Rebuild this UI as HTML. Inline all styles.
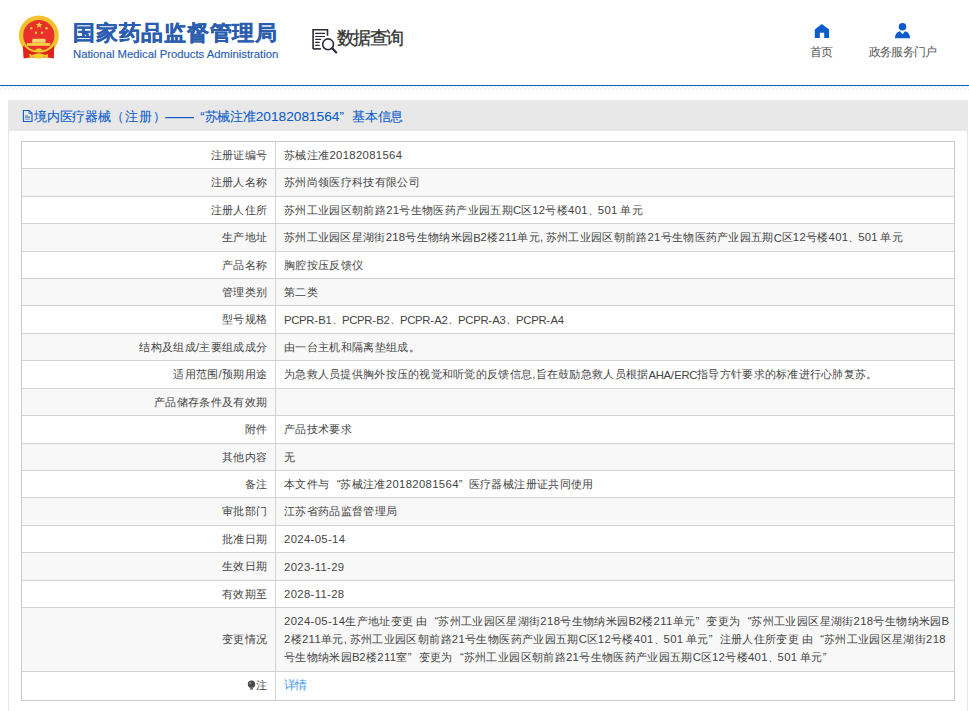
<!DOCTYPE html>
<html><head><meta charset="utf-8">
<style>
*{box-sizing:border-box;margin:0;padding:0}
html,body{width:969px;height:711px;overflow:hidden;background:#fff;font-family:"Liberation Sans",sans-serif;color:#333}
q{quotes:none}
u{text-decoration:none;letter-spacing:-0.3px}
b.dn{font-weight:normal;letter-spacing:-1.2px}
.hdr{position:absolute;left:0;top:0;width:969px;height:91px}
.emb,.sq,.navi{position:absolute;left:0;top:0}
.doc{position:absolute;left:0;top:0}
.t1{position:absolute;left:73px;top:19px;font-size:22px;font-weight:bold;color:#2a5db0;white-space:nowrap;letter-spacing:0.75px;-webkit-text-stroke:0.35px #2a5db0;transform:scaleY(0.96);transform-origin:0 0}
.t2{position:absolute;left:73px;top:48px;font-size:11.3px;color:#2a5db0;white-space:nowrap;-webkit-text-stroke:0.15px #2a5db0}
.sqt{position:absolute;left:337px;top:26px;font-size:18px;color:#333;-webkit-text-stroke:0.3px #333;white-space:nowrap;letter-spacing:-1.6px}
.nav1{position:absolute;left:810px;top:44px;font-size:12px;color:#555;white-space:nowrap;letter-spacing:-0.8px}
.nav2{position:absolute;left:869px;top:44px;font-size:12px;color:#555;white-space:nowrap;letter-spacing:-0.8px}
.line{position:absolute;left:0;top:85px;width:969px;height:1px;background:#0b5ec5}
.stripe{position:absolute;left:0;top:86px;width:969px;height:4px}
.panel{position:absolute;left:8px;top:100px;width:960px;height:640px;border-left:1px solid #e6e6e6;border-right:1px solid #e6e6e6;background:#fff}
.ph{position:absolute;left:-1px;top:0;width:960px;height:31px;background:#e8e8e8}
.h1,.h2,.h3{position:absolute;top:108px;font-size:13px;color:#0d5dcc;-webkit-text-stroke:0.1px #0d5dcc;white-space:nowrap;letter-spacing:-0.2px;line-height:17px}
.h1{left:34px}.h2{left:196px}.h3{left:352px}
.hn{font-size:13.7px;letter-spacing:0}
.hp{letter-spacing:0.9px}
.tb{position:absolute;left:21px;top:141px;width:934px;height:560px;border:1px solid #cdcacd;border-top:0;font-size:11.3px;color:#444;letter-spacing:0.35px;word-spacing:-1px}
.r{position:absolute;left:0;width:932px;border-top:1px solid #d3d1d3;background:#fff}
.r:first-child{border-top-color:#cdcacd}
.r.g{background:#f8f8f8}
.l{position:absolute;left:0;top:0;bottom:0;width:253px;padding-right:7.5px;display:flex;align-items:center;justify-content:flex-end;white-space:nowrap}
.v{position:absolute;left:253px;top:0;bottom:0;right:0;border-left:1px solid #d3d1d3;padding-left:8px;display:flex;align-items:center;white-space:nowrap}
.v.m{line-height:18px;display:block;padding-top:4px}
q.o{display:inline-block;width:8.5px;text-align:right;letter-spacing:0}
q.c{display:inline-block;width:8.5px;text-align:left;letter-spacing:0}
.pin{width:9px;height:11px;margin-right:0.5px;vertical-align:middle}
.lst .l,.lst .v{padding-bottom:2px}
.lst a{font-size:12.4px;letter-spacing:-1.2px;color:#3b93ee}
a{color:#2a8ae8;text-decoration:none}

</style></head><body>
<div class="hdr">
  <svg class="emb" width="969" height="91" viewBox="0 0 969 91">
    <circle cx="38.8" cy="35.6" r="20" fill="#f2c12c"/>
    <circle cx="38.8" cy="35.6" r="15.6" fill="#e9302a"/>
    <path d="M22.8 46.5 L24.8 45.6 C28.3 49.6 33.2 51.6 38.9 51.6 C44.6 51.6 49.5 49.6 53 45.6 L54.2 46.5 L53.8 58.4 L47.5 57.6 L30.5 57.6 L23.6 58.4Z" fill="#e3211b"/>
    <path d="M24.8 45.6 C28.3 49.6 33.2 51.6 38.9 51.6 C44.6 51.6 49.5 49.6 53 45.6" fill="none" stroke="#f4cc2a" stroke-width="1.6"/>
    <path d="M35 50.5 C36 48.6 37.5 48.4 38.9 48.4 C40.3 48.4 41.8 48.6 42.8 50.5 L42 52 L35.8 52Z" fill="#f4cc2a"/>
    <path d="M39.1 21.8l0.95 2.2 2.4 0.1-1.85 1.5 0.65 2.3-2.15-1.35-2.15 1.35 0.65-2.3-1.85-1.5 2.4-0.1z" fill="#f6cf3a"/>
    <circle cx="31.3" cy="28.2" r="1.2" fill="#f6cf3a"/><circle cx="46.6" cy="28.2" r="1.2" fill="#f6cf3a"/>
    <circle cx="36" cy="32.7" r="1.2" fill="#f6cf3a"/><circle cx="42" cy="32.7" r="1.2" fill="#f6cf3a"/>
    <path d="M32.8 38.7h12.2l0.6 1.2v2.8h-13.4v-2.8z" fill="#f5d66e"/>
    <path d="M26.9 43h23.4v2.8h-23.4z" fill="#f6d040"/>
    <path d="M29 53.8 L32.5 55 L36 53.8 L38.9 53.3 L41.8 53.8 L45.2 55 L48.2 53.8 L47.4 58.4 L44.5 56.5 L41.5 58.4 L36.3 58.4 L33.3 56.5 L30.4 58.4Z" fill="#f4cc2a"/>
  </svg>
  <div class="t1">国家药品监督管理局</div>
  <div class="t2">National Medical Products Administration</div>
  <svg class="sq" width="969" height="91" viewBox="0 0 969 91">
    <path d="M313.1 48.9V29.8H327.5V35.7" fill="none" stroke="#2b2b3b" stroke-width="1.6"/>
    <path d="M313.1 48.9H320.9" fill="none" stroke="#2b2b3b" stroke-width="1.6"/>
    <path d="M315.2 33.4H325M315.2 36.5H325M315.2 39.4H321.2M315.2 42.4H319.7M315.2 45.4H319.7" fill="none" stroke="#2b2b3b" stroke-width="1.1"/>
    <circle cx="328.1" cy="44.3" r="5.4" fill="none" stroke="#2b2b3b" stroke-width="1.6"/>
    <path d="M332.2 48.2L336.2 52.4" fill="none" stroke="#2b2b3b" stroke-width="2.2" stroke-linecap="round"/>
  </svg>
  <div class="sqt">数据查询</div>
  <svg class="navi" width="969" height="91" viewBox="0 0 969 91">
    <path d="M821.8 23.9L829.1 29.6V37.9H824.2V32.8H819.8V37.9H814.8V29.6Z" fill="#0b5cc9"/>
    <circle cx="902.5" cy="26.8" r="3.8" fill="#0b5cc9"/>
    <path d="M895 38.2C895 34 897.5 31.6 900 31.2L902.5 34.2L905 31.2C907.5 31.6 910.1 34 910.1 38.2Z" fill="#0b5cc9"/>
  </svg>
  <div class="nav1">首页</div>
  <div class="nav2">政务服务门户</div>
</div>
<div class="line"></div><svg class="stripe" width="969" height="4"><defs><pattern id="sp" width="4" height="4" patternUnits="userSpaceOnUse" x="0"><path d="M-1 5L5 -1" stroke="#e2e2e2" stroke-width="0.9"/></pattern></defs><rect width="969" height="4" fill="url(#sp)"/></svg>
<div class="panel">
  <div class="ph"></div>
</div>
<svg class="doc" width="969" height="140" viewBox="0 0 969 140"><path d="M23.4 110.5H29.2L32 113.3V121.5H23.4Z" fill="none" stroke="#0d5dcc" stroke-width="1.1"/><path d="M29 110.8V113.6H31.8" fill="none" stroke="#0d5dcc" stroke-width="0.8"/><rect x="25" y="115" width="3" height="1" fill="#9ab"/><rect x="25" y="116.6" width="5" height="1" fill="#0d5dcc"/><rect x="25" y="118.4" width="5" height="1.6" fill="#9fb3d8"/><rect x="165.2" y="117" width="28.8" height="1.2" fill="#0d5dcc"/></svg>
<div class="h1">境内医疗器械<span class="hp">（注册）</span></div>
<div class="h2"><q class="o">“</q>苏械注准<span class="hn">20182081564</span><q class="c">”</q></div>
<div class="h3">基本信息</div>

<div class="tb">
<div class="r" style="top:0px;height:27px"><div class="l">注册证编号</div><div class="v">苏械注准20182081564</div></div>
<div class="r g" style="top:27px;height:28px"><div class="l">注册人名称</div><div class="v">苏州尚领医疗科技有限公司</div></div>
<div class="r" style="top:55px;height:27px"><div class="l">注册人住所</div><div class="v">苏州工业园区朝前路21号生物医药产业园五期<u>C</u>区12号楼401<b class="dn">、</b>501 单元</div></div>
<div class="r g" style="top:82px;height:28px"><div class="l">生产地址</div><div class="v" style="letter-spacing:0.3px">苏州工业园区星湖街218号生物纳米园<u>B</u>2楼211单元, 苏州工业园区朝前路21号生物医药产业园五期<u>C</u>区12号楼401<b class="dn">、</b>501 单元</div></div>
<div class="r" style="top:110px;height:27px"><div class="l">产品名称</div><div class="v">胸腔按压反馈仪</div></div>
<div class="r g" style="top:137px;height:27px"><div class="l">管理类别</div><div class="v">第二类</div></div>
<div class="r" style="top:164px;height:28px"><div class="l">型号规格</div><div class="v"><u>PCPR</u>-<u>B</u>1<b class="dn">、</b><u>PCPR</u>-<u>B</u>2<b class="dn">、</b><u>PCPR</u>-<u>A</u>2<b class="dn">、</b><u>PCPR</u>-<u>A</u>3<b class="dn">、</b><u>PCPR</u>-<u>A</u>4</div></div>
<div class="r g" style="top:192px;height:27px"><div class="l">结构及组成/主要组成成分</div><div class="v">由一台主机和隔离垫组成。</div></div>
<div class="r" style="top:219px;height:28px"><div class="l">适用范围/预期用途</div><div class="v" style="letter-spacing:0.28px">为急救人员提供胸外按压的视觉和听觉的反馈信息,旨在鼓励急救人员根据<u>AHA</u>/<u>ERC</u>指导方针要求的标准进行心肺复苏。</div></div>
<div class="r g" style="top:247px;height:27px"><div class="l">产品储存条件及有效期</div><div class="v"></div></div>
<div class="r" style="top:274px;height:28px"><div class="l">附件</div><div class="v">产品技术要求</div></div>
<div class="r g" style="top:302px;height:27px"><div class="l">其他内容</div><div class="v">无</div></div>
<div class="r" style="top:329px;height:27px"><div class="l">备注</div><div class="v">本文件与 <q class="o" style="width:11px">“</q>苏械注准20182081564<q class="c" style="width:10px">”</q> 医疗器械注册证共同使用</div></div>
<div class="r g" style="top:356px;height:28px"><div class="l">审批部门</div><div class="v">江苏省药品监督管理局</div></div>
<div class="r" style="top:384px;height:27px"><div class="l">批准日期</div><div class="v">2024-05-14</div></div>
<div class="r g" style="top:411px;height:28px"><div class="l">生效日期</div><div class="v">2023-11-29</div></div>
<div class="r" style="top:439px;height:27px"><div class="l">有效期至</div><div class="v">2028-11-28</div></div>
<div class="r g" style="top:466px;height:64px"><div class="l">变更情况</div><div class="v m">2024-05-14生产地址变更 由 <q class="o">“</q>苏州工业园区星湖街218号生物纳米园<u>B</u>2楼211单元<q class="c">”</q> 变更为 <q class="o">“</q>苏州工业园区星湖街218号生物纳米园<u>B</u><br>2楼211单元, 苏州工业园区朝前路21号生物医药产业园五期<u>C</u>区12号楼401<b class="dn">、</b>501 单元<q class="c">”</q> 注册人住所变更 由 <q class="o">“</q>苏州工业园区星湖街218<br>号生物纳米园<u>B</u>2楼211室<q class="c">”</q> 变更为 <q class="o">“</q>苏州工业园区朝前路21号生物医药产业园五期<u>C</u>区12号楼401<b class="dn">、</b>501 单元<q class="c">”</q></div></div>
<div class="r lst" style="top:530px;height:29px"><div class="l"><svg class="pin" viewBox="0 0 10 12"><circle cx="5" cy="4.6" r="4.1" fill="#4a4a4a"/><circle cx="3.6" cy="3.4" r="1.1" fill="#9a9a9a"/><rect x="3.3" y="8.2" width="3.4" height="2.6" rx="0.6" fill="#777"/></svg>注</div><div class="v"><a>详情</a></div></div>
</div>
</body></html>
